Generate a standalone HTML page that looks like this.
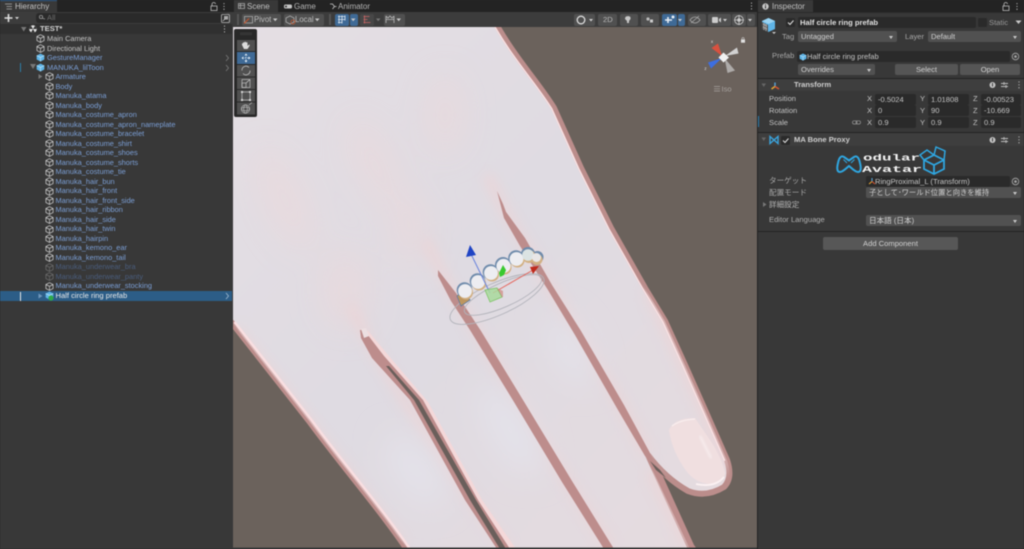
<!DOCTYPE html>
<html><head><meta charset="utf-8"><title>Unity</title>
<style>
*{box-sizing:border-box}
html,body{margin:0;padding:0;width:1024px;height:549px;overflow:hidden;background:#282828}
body{position:relative;font-family:"Liberation Sans","Noto Sans CJK JP",sans-serif;font-size:7.6px;color:#c4c4c4}
#all{position:absolute;inset:0;filter:blur(.4px)}
.a{position:absolute;white-space:nowrap}
.t{line-height:10px;height:10px}
.f{position:absolute;background:#2a2a2a;border-radius:2px;line-height:11px;height:11px;padding-left:3px;color:#c4c4c4;white-space:nowrap}
.d{position:absolute;background:#515151;border-radius:2px;line-height:11px;height:11px;padding-left:3px;color:#d0d0d0;white-space:nowrap}
.d:after{content:"";position:absolute;right:4px;top:4.5px;border:2.5px solid transparent;border-top:3px solid #c8c8c8;border-bottom:0}
.b{position:absolute;background:#555;border-radius:2px;text-align:center;color:#d0d0d0;line-height:11px;height:11px}
.k{position:absolute;background:#505050;border-radius:2px;height:12px;top:14px}
#hr{position:absolute;left:0;top:34px;width:232px;font-size:7.4px}
.r{position:relative;height:9.52px;line-height:9.52px;color:#7b9fd6;white-space:nowrap}
.r svg{position:absolute;top:.3px;left:44.5px;width:9px;height:9px}
.r span{position:absolute;left:55.5px;top:0}
.r.l1 svg{left:36px}.r.l1 span{left:47px}
.r.dim{color:#4a5d7d}.r.dim svg{opacity:.35}
</style></head><body>
<svg width="0" height="0" style="position:absolute"><defs>
<symbol id="cube" viewBox="0 0 8 8"><path d="M4 .6 7.2 2.2V5.8L4 7.5.8 5.8V2.2ZM.8 2.2 4 3.9 7.2 2.2M4 3.9V7.500" fill="none" stroke="#c2c2c2" stroke-width=".7"/></symbol>
<symbol id="pc" viewBox="0 0 8 8"><path d="M4 .5 7.4 2.2V5.8L4 7.6.6 5.8V2.2Z" fill="#5fb4e6"/><path d="M.6 2.2 4 3.9 7.4 2.2M4 3.9V7.6" fill="none" stroke="#cfeaf9" stroke-width=".5"/></symbol>
</defs></svg>
<div id="all">

<!-- Hierarchy -->
<div class="a" style="left:0;top:0;width:233px;height:549px;background:#383838"></div>
<div class="a" style="left:0;top:0;width:233px;height:12px;background:#232323"></div>
<div class="a" style="left:0;top:0;width:57px;height:12px;background:#383838;border-top:1px solid #2d5c8c"></div>
<svg class="a" style="left:5px;top:3px" width="7" height="7"><path d="M0 1H7M1.5 3.5H7M1.5 6H7" stroke="#aaa" stroke-width=".8"/></svg>
<div class="a t" style="left:15px;top:2px;color:#c4c4c4;font-size:8px">Hierarchy</div>
<svg class="a" style="left:210px;top:2px" width="20" height="9"><rect x="1" y="4" width="6" height="4.5" fill="none" stroke="#bbb" stroke-width=".8"/><path d="M2 4V2.5A1.6 1.6 0 0 1 5.5 2" fill="none" stroke="#bbb" stroke-width=".8"/><path d="M14 1.2v.9M14 4v.9M14 6.8v.9" stroke="#ccc" stroke-width="1.1"/></svg>
<div class="a" style="left:0;top:12px;width:233px;height:12px;background:#3c3c3c"></div>
<svg class="a" style="left:4px;top:13px" width="16" height="10"><path d="M4.5 1v8M.5 5h8" stroke="#e0e0e0" stroke-width="1.6"/><path d="M11 4h4l-2 2.4z" fill="#d0d0d0"/></svg>
<div class="a" style="left:36px;top:13px;width:192px;height:10px;background:#2a2a2a;border-radius:3px"></div>
<div class="a" style="left:47px;top:13px;line-height:10px;color:#6c6c6c">All</div>
<svg class="a" style="left:38px;top:14px" width="8" height="8"><circle cx="3" cy="3" r="1.6" fill="none" stroke="#999" stroke-width=".8"/><path d="M4.2 4.2 7 5" stroke="#999" stroke-width=".8"/></svg>
<svg class="a" style="left:221px;top:13.5px" width="9" height="9"><rect x=".5" y=".5" width="8" height="8" rx="1" fill="none" stroke="#bbb" stroke-width=".8"/><rect x="3" y="2" width="4" height="3.6" fill="#aaa"/><path d="M1.8 7 4 5" stroke="#ccc" stroke-width=".8"/></svg>
<div class="a" style="left:0;top:24px;width:232px;height:10px;background:#303030"></div>
<svg class="a" style="left:21px;top:27px" width="6" height="6"><path d="M0 0H5.5L2.7 4.5Z" fill="#777"/></svg>
<svg class="a" style="left:29px;top:25px" width="8" height="8"><circle cx="4" cy="4" r="3.8" fill="#e2e2e2"/><path d="M4 4 2 .9A3.6 3.6 0 0 0 .4 4ZM4 4 6 .9A3.6 3.6 0 0 1 7.6 4ZM4 4 2.2 7.2A3.6 3.6 0 0 0 5.8 7.2Z" fill="#333"/></svg>
<div class="a t" style="left:40px;top:24px;color:#d2d2d2;font-weight:bold">TEST*</div>
<svg class="a" style="left:223px;top:25px" width="3" height="8"><path d="M1.5 .6v1M1.5 3.5v1M1.5 6.4v1" stroke="#ccc" stroke-width="1"/></svg>

<div class="a" style="left:0;top:291px;width:232px;height:10px;background:#2c5d87"></div>
<div class="a" style="left:19.5px;top:292px;width:1.5px;height:9px;background:#e6e6e6"></div>
<div class="a" style="left:19.5px;top:63px;width:1px;height:9px;background:#2d7ea8"></div>

<div id="hr">
<div class="r l1" style="color:#c4c4c4"><svg><use href="#cube"/></svg><span>Main Camera</span></div>
<div class="r l1" style="color:#c4c4c4"><svg><use href="#cube"/></svg><span>Directional Light</span></div>
<div class="r l1"><svg><use href="#pc"/></svg><span>GestureManager</span></div>
<div class="r l1"><svg><use href="#pc"/></svg><span>MANUKA_lilToon</span></div>
<div class="r"><svg><use href="#cube"/></svg><span>Armature</span></div>
<div class="r"><svg><use href="#cube"/></svg><span>Body</span></div>
<div class="r"><svg><use href="#cube"/></svg><span>Manuka_atama</span></div>
<div class="r"><svg><use href="#cube"/></svg><span>Manuka_body</span></div>
<div class="r"><svg><use href="#cube"/></svg><span>Manuka_costume_apron</span></div>
<div class="r"><svg><use href="#cube"/></svg><span>Manuka_costume_apron_nameplate</span></div>
<div class="r"><svg><use href="#cube"/></svg><span>Manuka_costume_bracelet</span></div>
<div class="r"><svg><use href="#cube"/></svg><span>Manuka_costume_shirt</span></div>
<div class="r"><svg><use href="#cube"/></svg><span>Manuka_costume_shoes</span></div>
<div class="r"><svg><use href="#cube"/></svg><span>Manuka_costume_shorts</span></div>
<div class="r"><svg><use href="#cube"/></svg><span>Manuka_costume_tie</span></div>
<div class="r"><svg><use href="#cube"/></svg><span>Manuka_hair_bun</span></div>
<div class="r"><svg><use href="#cube"/></svg><span>Manuka_hair_front</span></div>
<div class="r"><svg><use href="#cube"/></svg><span>Manuka_hair_front_side</span></div>
<div class="r"><svg><use href="#cube"/></svg><span>Manuka_hair_ribbon</span></div>
<div class="r"><svg><use href="#cube"/></svg><span>Manuka_hair_side</span></div>
<div class="r"><svg><use href="#cube"/></svg><span>Manuka_hair_twin</span></div>
<div class="r"><svg><use href="#cube"/></svg><span>Manuka_hairpin</span></div>
<div class="r"><svg><use href="#cube"/></svg><span>Manuka_kemono_ear</span></div>
<div class="r"><svg><use href="#cube"/></svg><span>Manuka_kemono_tail</span></div>
<div class="r dim"><svg><use href="#cube"/></svg><span>Manuka_underwear_bra</span></div>
<div class="r dim"><svg><use href="#cube"/></svg><span>Manuka_underwear_panty</span></div>
<div class="r"><svg><use href="#cube"/></svg><span>Manuka_underwear_stocking</span></div>
<div class="r" style="color:#e8e8e8;font-size:7.600px"><svg><use href="#pc"/></svg><span>Half circle ring prefab</span></div>
</div>
<svg class="a" style="left:0;top:0" width="233" height="310">
<path d="M30 64H36L33 69Z M38.5 74V79L42.5 76.5Z" fill="#777"/>
<path d="M38.5 293.5V298.5L42.5 296Z" fill="#6f97bb"/>
<circle cx="51" cy="298" r="2.6" fill="#2fa84a"/>
<path d="M226 55 228.5 58 226 61M226 65 228.5 68 226 71" fill="none" stroke="#777" stroke-width=".9"/>
<path d="M226 293 228.5 296 226 299" fill="none" stroke="#9ab4cc" stroke-width=".9"/>
</svg>

<!-- Scene -->
<div class="a" style="left:233px;top:0;width:525px;height:12px;background:#232323"></div>
<div class="a" style="left:234px;top:0;width:44px;height:12px;background:#383838"></div>
<div class="a t" style="left:247px;top:2px;color:#c0c0c0;font-size:8px">Scene</div>
<div class="a t" style="left:294px;top:2px;color:#b4b4b4;font-size:8px">Game</div>
<div class="a t" style="left:338px;top:2px;color:#b4b4b4;font-size:8px">Animator</div>
<svg class="a" style="left:236px;top:0" width="105" height="12"><path d="M2.500 3.500H8.500V8.500H2.500ZM2.500 5.500H8.500M4.500 3.500V8.500" fill="none" stroke="#aaa" stroke-width=".8"/><rect x="48" y="4.500" width="8" height="4" rx="1.500" fill="#c4c4c4"/><circle cx="50" cy="6.500" r="1" fill="#333"/><path d="M94 4H96.500L98.500 6.500H100.500M96.500 9 98.500 6.500" fill="none" stroke="#ccc" stroke-width=".8"/></svg>
<svg class="a" style="left:750px;top:2px" width="3" height="8"><path d="M1.5 .6v1M1.5 3.5v1M1.5 6.4v1" stroke="#ccc" stroke-width="1"/></svg>
<div class="a" style="left:233px;top:12px;width:525px;height:15px;background:#3c3c3c"></div>
<div class="a" style="left:237px;top:14px;width:2px;height:11px;border-left:1px solid #555;border-right:1px solid #555"></div>
<div class="k" style="left:242px;width:39px;top:13.500px"></div>
<div class="a t" style="left:254px;top:14.500px;color:#bbb;font-size:7.800px">Pivot</div>
<div class="k" style="left:284px;width:40px;top:13.500px"></div>
<div class="a t" style="left:295px;top:14.500px;color:#bbb;font-size:7.800px">Local</div>
<div class="a" style="left:329px;top:14px;width:2px;height:11px;border-left:1px solid #555;border-right:1px solid #555"></div>
<div class="k" style="left:335px;width:14px;top:13.500px;background:#3f6a96"></div>
<div class="k" style="left:350px;width:8px;top:13.500px;background:#3f6a96"></div>
<div class="k" style="left:360px;width:14px;top:13.500px;background:#474747"></div>
<div class="k" style="left:384px;width:21px;top:13.500px"></div>
<svg class="a" style="left:233px;top:12px" width="185" height="15">
<path d="M11.500 4.500H19.500V11H11.500Z" fill="none" stroke="#aaa" stroke-width=".8"/><path d="M11 11.500 16 6.500" stroke="#c2552f" stroke-width="1.200"/>
<path d="M53 6 57 4 61 6V10L57 12 53 10Z" fill="none" stroke="#aaa" stroke-width=".8"/><circle cx="60" cy="10" r="2" fill="none" stroke="#c2552f" stroke-width=".8"/>
<path d="M40 6.500H44.500L42.200 9.300ZM82 6.500H86.500L84.200 9.300ZM118 6.500H122.500L120.200 9.300ZM163.500 6.500H168L165.700 9.300Z" fill="#c8c8c8"/>
<path d="M143 6.500H147.500L145.200 9.300Z" fill="#777"/>
<path d="M105 4.500h7M105 7.500h7M105 10.500h4M106 3.500v8M109 3.500v8M112 3.500v5" stroke="#dfe8f1" stroke-width=".8" fill="none"/>
<path d="M130.500 4.500h6M130.500 7.500h4M130.500 10.500h7M131.500 3.500v8" stroke="#c66" stroke-width=".8" fill="none"/>
<path d="M153 4v7M161 4v7M153 7.500h8M153 4l2 2 2-2 2 2 2-2" stroke="#bbb" stroke-width=".8" fill="none"/>
</svg>
<div class="k" style="left:574px;width:21px"></div>
<div class="k" style="left:598px;width:19px"></div>
<div class="a t" style="left:603px;top:15px;color:#bbb">2D</div>
<div class="k" style="left:620px;width:18px"></div>
<div class="k" style="left:641px;width:18px"></div>
<div class="k" style="left:662px;width:15px;background:#3f6a96"></div>
<div class="k" style="left:677.500px;width:7.500px;background:#3f6a96"></div>
<div class="k" style="left:688px;width:18px"></div>
<div class="k" style="left:708px;width:23px"></div>
<div class="k" style="left:732px;width:14px"></div>
<div class="k" style="left:746.500px;width:8px"></div>
<svg class="a" style="left:560px;top:12px" width="198" height="15">
<circle cx="21" cy="8" r="3.800" fill="none" stroke="#ddd" stroke-width="1.300"/>
<path d="M29 7H33L31 9.500ZM118 7H122L120 9.500ZM163 7H167L165 9.500ZM188 7H192L190 9.500Z" fill="#d0d0d0"/>
<path d="M66 4.500c3-1 5 0 4.500 2.500l-1.500 2v2h-2V9L65 7c0-1 .3-2 1-2.500Z" fill="#c6c6c6"/>
<circle cx="88" cy="7" r="1.600" fill="#bbb"/><rect x="90" y="7.500" width="3" height="3" fill="#ccc"/>
<path d="M105 8h7M108 5v6" stroke="#e8eef5" stroke-width="1.600"/><circle cx="113" cy="5" r="1.500" fill="#e8eef5"/>
<path d="M130 8c3-4 7-4 10 0-3 4-7 4-10 0ZM131 11 139 4" fill="none" stroke="#aaa" stroke-width=".8"/>
<rect x="152" y="5" width="6" height="6" rx="1" fill="#ccc"/><path d="M159 7 161 5.500V10.500L159 9Z" fill="#ccc"/>
<circle cx="179" cy="8" r="4.300" fill="none" stroke="#ccc" stroke-width=".8"/><path d="M179 3V13M174 8H184" stroke="#ccc" stroke-width=".8"/><circle cx="179" cy="8" r="1.800" fill="#ccc"/>
</svg>

<svg class="a" style="left:233px;top:27px" width="525" height="522" viewBox="233 27 525 522">
<defs>
<filter id="b1"><feGaussianBlur stdDeviation="1"/></filter>
<filter id="b6" x="-30%" y="-30%" width="160%" height="160%"><feGaussianBlur stdDeviation="6"/></filter>
<filter id="b14" x="-50%" y="-50%" width="200%" height="200%"><feGaussianBlur stdDeviation="16"/></filter>
<linearGradient id="sk" x1="0" y1="0" x2="1" y2="1"><stop offset="0" stop-color="#e5dfe4"/><stop offset=".5" stop-color="#dfdbe2"/><stop offset="1" stop-color="#e6dbdf"/></linearGradient>
<clipPath id="hc"><path d="M225 15H491C512 55 538 82 554 108L581 168 611 228 645 288 665 321 685 365 705 410 727 460Q733 478 724 487 706 498 688 491 665 478 648 455L696 560H414C385 515 345 470 309 421L265 365 232 323 220 310Z"/></clipPath>
</defs>
<rect x="233" y="27" width="525" height="522" fill="#6b625c"/>
<path d="M225 15H491C512 55 538 82 554 108L581 168 611 228 645 288 665 321 685 365 705 410 727 460Q733 478 724 487 706 498 688 491 665 478 648 455L696 560H414C385 515 345 470 309 421L265 365 232 323 220 310Z" fill="url(#sk)" stroke="#bb8d8b" stroke-width="6"/>
<g clip-path="url(#hc)">
 <g filter="url(#b14)" fill="#ecd8da" opacity=".55">
  <ellipse cx="445" cy="115" rx="18" ry="40"/>
  <ellipse cx="375" cy="165" rx="18" ry="50" transform="rotate(-25 375 165)"/>
  <ellipse cx="285" cy="200" rx="20" ry="55" transform="rotate(-25 285 200)"/>
  <ellipse cx="410" cy="230" rx="18" ry="36"/>
  <ellipse cx="345" cy="290" rx="24" ry="40"/>
 </g>
 <g filter="url(#b6)" fill="none" stroke="#edd4d6" opacity=".85">
  <path d="M487 175 505 211 551 288 578 331 621 405 648 455" stroke-width="9"/>
  <path d="M425 240 450 288 517 398 567 481 611 549" stroke-width="9"/>
  <path d="M350 305 376 355 450 470 507 549" stroke-width="9"/>
  <path d="M234 330 309 425 400 545" stroke-width="12"/>
  <path d="M648 290 705 410 725 470" stroke-width="10"/>
  <path d="M650 470 690 549" stroke-width="9"/>
 </g>
 <g filter="url(#b14)" fill="#e4e3eb">
  <ellipse cx="415" cy="470" rx="18" ry="40" transform="rotate(-35 415 470)"/>
  <ellipse cx="510" cy="430" rx="18" ry="50" transform="rotate(-30 510 430)"/>
  <ellipse cx="570" cy="350" rx="14" ry="36" transform="rotate(-28 570 350)"/>
 </g>
 <path d="M491 15C512 55 538 82 554 108L581 168 611 228 645 288 665 321 685 365 705 410 727 460" fill="none" stroke="#fae3e5" stroke-width="1.400" transform="translate(-2.200 .8)"/>
 <path d="M232 323 265 365 309 421C345 470 385 515 414 560" fill="none" stroke="#f9dfe1" stroke-width="2.500" transform="translate(2.500 -1)"/>
</g>
<!-- left cleft -->
<path d="M364 331 384 356 423 400 478 500 510 549 516 549 482 500 428 402 388 355 368 331Z" fill="#f4d8d9"/>
<path d="M360 330 364 330 384 356 423 400 478 500 510 549H497L465 500 410 400 372 358 361 338Z" fill="#bd8d8c"/>
<path d="M386 366 389 366 419 400 476 500 506 549H500L470 500 414 400Z" fill="#6a5f5b"/>
<path d="M361 329 366 328 369 336 364 338Z" fill="#ecdfe1"/>
<!-- middle cleft -->
<path d="M438 270 456 293 481 331 523 400 572 481 614 549H604L562 482 514 402 470 330 451 301 438 276Z" fill="#bd8d8c"/>
<!-- right cleft -->
<path d="M497 191 503 204 506 212 525 238 552 285 581 331 624 405 650 453 654 463 645 456 618 410 575 335 548 290 520 246 504 218Z" fill="#bd8d8c"/>
<path d="M646 456 654 463 661 472 694 545 697 549H690Z" fill="#bd8d8c"/>
<path d="M650 461 660 470 666 478 656 470Z" fill="#6a5f5b"/>
<!-- nail -->
<path d="M669 430Q674 418 695 418L710 440Q722 458 725 473 724 482 712 484 697 484 687 472 672 452 669 430Z" fill="#f0dfe0"/>
<path d="M672 426Q680 420 695 419" fill="none" stroke="#f8eeee" stroke-width="1.300"/>
<path d="M696 484Q715 488 724 477" fill="none" stroke="#fbf1f2" stroke-width="1.800"/>
<path d="M700 436 711 458" stroke="#fbf5f6" stroke-width="1.300" fill="none" filter="url(#b1)"/>

<!-- ring outlines -->
<g fill="none" stroke="#b2b3ba" stroke-width=".9">
 <ellipse cx="497" cy="299" rx="51" ry="16" transform="rotate(-24 497 299)"/>
 <ellipse cx="503" cy="295" rx="42" ry="12" transform="rotate(-24 503 295)"/>
</g>
<!-- ring -->
<path d="M457 296 461 306 470 300 464 290Z" fill="#bd965f" stroke="#5f7c9e" stroke-width=".8"/>
<g fill="#6f8bab">
 <circle cx="464.500" cy="290" r="7.800"/><circle cx="477.500" cy="281" r="7.800"/><circle cx="490.500" cy="272" r="7.800"/><circle cx="503" cy="265" r="8"/><circle cx="516" cy="258" r="7.800"/><circle cx="528" cy="254" r="7"/><circle cx="537.500" cy="257" r="6"/>
</g>
<g fill="#d2b083">
 <circle cx="466" cy="292.500" r="7"/><circle cx="479" cy="283.500" r="7"/><circle cx="492" cy="274.500" r="7"/><circle cx="504.500" cy="267.500" r="7"/><circle cx="517.500" cy="260.500" r="7"/><circle cx="529" cy="256.500" r="6.500"/><circle cx="537" cy="259.500" r="5.500"/>
</g>
<g fill="#ededf1">
 <circle cx="465" cy="291" r="6.900"/><circle cx="478" cy="282" r="6.900"/><circle cx="491" cy="273" r="6.900"/><circle cx="503.500" cy="266" r="7.100"/><circle cx="516.500" cy="259" r="6.900"/><circle cx="528" cy="255" r="5.800" fill="#dbe3e3"/><circle cx="536.500" cy="257.500" r="4.500" fill="#e8e6e6"/>
</g>
<!-- move gizmo -->
<path d="M490 293 471 254" stroke="#6a84dc" stroke-width="1"/>
<path d="M493 293 533 270" stroke="#e4685f" stroke-width="1"/>
<path d="M470 245 466 257 476 255Z" fill="#1f44c4"/>
<path d="M539 266 530 267 533 274Z" fill="#bf2a1d"/>
<path d="M503 265 499 273 500 277 504 275 506 270Z" fill="#38c92f"/>
<path d="M485 290 497 288 502 297 490 302Z" fill="#a9d99c" fill-opacity=".85" stroke="#7fc56a" stroke-width=".8"/>
<path d="M497 288 503 291 503 297 502 297Z" fill="#cc7a70" fill-opacity=".6"/>

<!-- scene gizmo -->
<g>
 <path d="M722 56 711.500 48 718 43.500Z" fill="#d8513f"/>
 <path d="M725 56 737 47.500 738.500 53.500Z" fill="#d2d2d2"/>
 <path d="M724.500 58 727.500 73 735 70.500Z" fill="#aeaba9"/>
 <path d="M722 58 708 62.500 711 68.500Z" fill="#3d6ee0"/>
 <path d="M723.500 52.500 729 57.500 723.500 62.500 718.500 57.500Z" fill="#f1f1f1"/>
 <text x="712" y="43" font-size="4.500" fill="#ddd" text-anchor="middle" font-family="Liberation Sans">x</text>
 <text x="705.500" y="70" font-size="4.500" fill="#ddd" text-anchor="middle" font-family="Liberation Sans">z</text>
 <rect x="741" y="39.500" width="4" height="3.200" fill="#e0e0e0"/><path d="M742 39.500v-1a1 1 0 0 1 2 0v1" fill="none" stroke="#ddd" stroke-width=".6"/>
 <path d="M714 86.500h6M714 88.800h6M714 91h6" stroke="#a8a39f" stroke-width=".7"/>
 <text x="721.500" y="91.700" font-size="7.500" fill="#a8a39f" font-family="Liberation Sans">Iso</text>
</g>

<!-- tool panel -->
<rect x="234" y="29" width="23" height="88" rx="2" fill="#282828"/>
<path d="M240 33h12M240 34.500h12" stroke="#4d4d4d" stroke-width=".6"/>
<g fill="#505050">
 <rect x="237" y="40" width="18" height="11"/><rect x="237" y="52" width="18" height="12" fill="#3f6a96"/>
 <rect x="237" y="65" width="18" height="11.500"/><rect x="237" y="77.500" width="18" height="11.500"/>
 <rect x="237" y="90" width="18" height="11.500"/><rect x="237" y="102.500" width="18" height="12"/>
</g>
<path d="M242 45 v-1c0-1 1-1 1 0v-1c0-1 1.500-1 1.500 0v-.5c0-1 1.500-1 1.500 0v.5c0-1 1.500-1 1.500 0v3l1-1c1-1 1.500 0 1 1l-2 3H244Z" fill="#dcdcdc"/>
<path d="M246 54v8M242 58h8" stroke="#cfe0f0" stroke-width=".7" stroke-dasharray="1.500 1"/><path d="M246 53.500 244.500 55.500H247.500ZM246 62.500 244.500 60.500H247.500ZM241.500 58 243.500 56.500V59.500ZM250.500 58 248.500 56.500V59.500Z" fill="#e6eff7"/>
<path d="M250 70.500A4 4 0 0 1 243 73.500M242 70.500A4 4 0 0 1 249 67.500" fill="none" stroke="#bcbcbc" stroke-width=".8"/>
<rect x="242" y="79.500" width="8" height="8" fill="none" stroke="#bcbcbc" stroke-width=".7"/><rect x="242" y="83" width="4" height="4.500" fill="none" stroke="#bcbcbc" stroke-width=".7"/><path d="M246 83 250 79.500" stroke="#ccc" stroke-width=".7"/>
<rect x="242" y="92" width="8" height="8" fill="none" stroke="#c4c4c4" stroke-width=".7"/><path d="M241 91h2v2h-2ZM249 91h2v2h-2ZM241 99h2v2h-2ZM249 99h2v2h-2Z" fill="#d4d4d4"/>
<g fill="none" stroke="#bcbcbc" stroke-width=".6"><circle cx="245.500" cy="109" r="4.200"/><ellipse cx="245.500" cy="109" rx="4.200" ry="1.800"/><ellipse cx="245.500" cy="109" rx="1.800" ry="4.200"/><path d="M249 105 252 102.500"/></g>
<rect x="233" y="547.500" width="525" height="1.500" fill="#3a3a3a"/>
</svg>

<!-- Inspector -->
<div class="a" style="left:757px;top:0;width:267px;height:549px;background:#383838;border-left:1px solid #232323"></div>
<div class="a" style="left:757px;top:0;width:267px;height:12px;background:#232323"></div>
<div class="a" style="left:758px;top:0;width:55px;height:12px;background:#383838"></div>
<svg class="a" style="left:762px;top:3px" width="7" height="7"><circle cx="3.500" cy="3.500" r="3.200" fill="#c8c8c8"/><rect x="3" y="2.800" width="1" height="2.700" fill="#333"/><rect x="3" y="1.300" width="1" height="1" fill="#333"/></svg>
<div class="a t" style="left:772px;top:2px;color:#c0c0c0;font-size:8px">Inspector</div>
<svg class="a" style="left:1002px;top:2px" width="20" height="9"><rect x="1" y="4" width="6" height="4.500" fill="none" stroke="#bbb" stroke-width=".8"/><path d="M2 4V2.500A1.600 1.600 0 0 1 5.500 2" fill="none" stroke="#bbb" stroke-width=".8"/><path d="M15 1.200v.9M15 4v.9M15 6.800v.9" stroke="#ccc" stroke-width="1.100"/></svg>
<div class="a" style="left:758px;top:12px;width:266px;height:1px;background:#2a2a2a"></div>

<svg class="a" style="left:761px;top:17px" width="16" height="18"><path d="M7.500 1 14 4V12L7.500 15 1 12V4Z" fill="#5fb4e6"/><path d="M1 4 7.500 7 14 4 7.500 1Z" fill="#9bd3f1"/><path d="M1 5 7 8V15L1 12Z" fill="#555"/><path d="M2 7l4 2M2 10l4 2M3 6v7M5 7v7" stroke="#ccc" stroke-width=".6"/><path d="M11 15H15L13 17Z" fill="#ccc"/></svg>
<div class="a" style="left:786px;top:18px;width:9px;height:9px;background:#2a2a2a;border-radius:1.500px"></div>
<svg class="a" style="left:786px;top:18px" width="9" height="9"><path d="M2 4.500 4 6.500 7.500 2.500" fill="none" stroke="#ddd" stroke-width="1.100"/></svg>
<div class="f" style="left:798px;top:17px;width:178px;color:#e0e0e0;font-weight:bold;padding-left:2px">Half circle ring prefab</div>
<div class="a" style="left:978px;top:18px;width:9px;height:9px;background:#2a2a2a;border-radius:1.500px"></div>
<div class="a t" style="left:989px;top:18px;color:#999">Static</div>
<svg class="a" style="left:1015px;top:20px" width="7" height="5"><path d="M.5 .5H6.500L3.500 4Z" fill="#c8c8c8"/></svg>

<div class="a t" style="left:782px;top:32px;color:#a8a8a8">Tag</div>
<div class="d" style="left:798px;top:31px;width:99px;height:11px">Untagged</div>
<div class="a t" style="left:905px;top:32px;color:#a8a8a8">Layer</div>
<div class="d" style="left:928px;top:31px;width:93px">Default</div>
<div class="a t" style="left:772px;top:51px;color:#a8a8a8">Prefab</div>
<div class="f" style="left:797px;top:51px;width:213px;padding-left:10px">Half circle ring prefab</div>
<svg class="a" style="left:799px;top:53px" width="8" height="8"><use href="#pc"/></svg>
<svg class="a" style="left:1011px;top:52px" width="9" height="9"><circle cx="4.500" cy="4.500" r="3.300" fill="none" stroke="#aaa" stroke-width=".8"/><circle cx="4.500" cy="4.500" r="1.300" fill="#aaa"/></svg>
<div class="d" style="left:798px;top:64px;width:77px">Overrides</div>
<div class="b" style="left:895px;top:64px;width:63px">Select</div>
<div class="b" style="left:960px;top:64px;width:60px">Open</div>
<div class="a" style="left:758px;top:78px;width:266px;height:1px;background:#232323"></div>

<div class="a" style="left:758px;top:79px;width:266px;height:12px;background:#3e3e3e"></div>
<svg class="a" style="left:761px;top:81px" width="22" height="9"><path d="M.5 2.500H5L2.700 6Z" fill="#666"/><path d="M14 1.500V5.500" stroke="#58a4d8" stroke-width="1.400"/><path d="M14 5.500 10.500 8" stroke="#e8a732" stroke-width="1.400"/><path d="M14 5.500 18 8" stroke="#d8532f" stroke-width="1.400"/></svg>
<div class="a t" style="left:794px;top:80px;color:#cfcfcf;font-weight:bold">Transform</div>
<svg class="a" style="left:988px;top:80px" width="34" height="10"><circle cx="4.500" cy="5" r="3" fill="#c4c4c4"/><rect x="4" y="3" width="1" height="3.500" fill="#3e3e3e"/><path d="M13 3.500h7M13 6.500h7" stroke="#bbb" stroke-width=".9"/><path d="M16 2v3M18 5v3" stroke="#bbb" stroke-width=".9"/><path d="M31 1.500v.9M31 4.400v.9M31 7.300v.9" stroke="#ccc" stroke-width="1.100"/></svg>

<div class="a t" style="left:769px;top:94px;color:#c2c2c2">Position</div>
<div class="a t" style="left:769px;top:105.500px;color:#c2c2c2">Rotation</div>
<div class="a t" style="left:769px;top:117.500px;color:#c2c2c2">Scale</div>
<div class="a" style="left:758px;top:116px;width:1px;height:11px;background:#2f7fb0"></div>
<svg class="a" style="left:852px;top:120px" width="9" height="5"><rect x=".5" y=".8" width="4.500" height="3.200" rx="1.500" fill="none" stroke="#999" stroke-width=".7"/><rect x="4" y=".8" width="4.500" height="3.200" rx="1.500" fill="none" stroke="#999" stroke-width=".7"/></svg>

<div class="a t" style="left:867px;top:94px">X</div><div class="f" style="left:875px;top:93.500px;width:41px">-0.5024</div>
<div class="a t" style="left:920px;top:94px">Y</div><div class="f" style="left:928px;top:93.500px;width:41px">1.01808</div>
<div class="a t" style="left:973px;top:94px">Z</div><div class="f" style="left:981px;top:93.500px;width:40px">-0.00523</div>
<div class="a t" style="left:867px;top:105.500px">X</div><div class="f" style="left:875px;top:105px;width:41px">0</div>
<div class="a t" style="left:920px;top:105.500px">Y</div><div class="f" style="left:928px;top:105px;width:41px">90</div>
<div class="a t" style="left:973px;top:105.500px">Z</div><div class="f" style="left:981px;top:105px;width:40px">-10.669</div>
<div class="a t" style="left:867px;top:117.500px">X</div><div class="f" style="left:875px;top:117px;width:41px">0.9</div>
<div class="a t" style="left:920px;top:117.500px">Y</div><div class="f" style="left:928px;top:117px;width:41px">0.9</div>
<div class="a t" style="left:973px;top:117.500px">Z</div><div class="f" style="left:981px;top:117px;width:40px">0.9</div>
<div class="a" style="left:758px;top:132px;width:266px;height:1px;background:#232323"></div>

<div class="a" style="left:758px;top:133px;width:266px;height:13px;background:#3e3e3e"></div>
<svg class="a" style="left:761px;top:135px" width="34" height="10"><path d="M.5 2.500H5L2.700 6Z" fill="#666"/><path d="M9 1.500 13 5 17 1.500V8.500L13 5 9 8.500Z" fill="none" stroke="#3aa3dc" stroke-width="1.400"/></svg>
<div class="a" style="left:781px;top:135.500px;width:9px;height:9px;background:#2a2a2a;border-radius:1.500px"></div>
<svg class="a" style="left:781px;top:135.500px" width="9" height="9"><path d="M2 4.500 4 6.500 7.500 2.500" fill="none" stroke="#ddd" stroke-width="1.100"/></svg>
<div class="a t" style="left:794px;top:135px;color:#cfcfcf;font-weight:bold">MA Bone Proxy</div>
<svg class="a" style="left:988px;top:135px" width="34" height="10"><circle cx="4.500" cy="5" r="3" fill="#c4c4c4"/><rect x="4" y="3" width="1" height="3.500" fill="#3e3e3e"/><path d="M13 3.500h7M13 6.500h7" stroke="#bbb" stroke-width=".9"/><path d="M16 2v3M18 5v3" stroke="#bbb" stroke-width=".9"/><path d="M31 1.500v.9M31 4.400v.9M31 7.300v.9" stroke="#ccc" stroke-width="1.100"/></svg>

<svg class="a" style="left:830px;top:145px" width="125" height="30">
<path d="M10 27C6.500 27 7 22 8 18 9 13 11 10 14 12L19 15.500 24 12C27 10 29 13 30 18 31 22 31.500 27 28 27 25 27 21.500 23 19 21 16.500 23 13 27 10 27Z" fill="none" stroke="#2fa6e0" stroke-width="2"/>
<path d="M17 18 13.500 14.500M21 18 24.500 14.500" stroke="#2fa6e0" stroke-width="1"/>
<text x="33" y="15.500" font-family="Liberation Mono" font-weight="bold" font-size="9.500" fill="#f2f2f2" textLength="57" lengthAdjust="spacingAndGlyphs">odular</text>
<text x="32" y="27" font-family="Liberation Mono" font-weight="bold" font-size="9.500" fill="#f2f2f2" textLength="60" lengthAdjust="spacingAndGlyphs">Avatar</text>
<path d="M94 15 104 10 114 15V24L104 29 94 24ZM94 15 104 20 114 15M104 20V29" fill="none" stroke="#2fa6e0" stroke-width="1.800"/>
<path d="M94 15 90 10 97 5 104 10ZM114 15 115 6 106 2 104 10" fill="none" stroke="#2fa6e0" stroke-width="1.500"/>
</svg>

<div class="a t" style="left:769px;top:176px;color:#a8a8a8">ターゲット</div>
<div class="f" style="left:866px;top:175.500px;width:144px;padding-left:9px">RingProximal_L (Transform)</div>
<svg class="a" style="left:868px;top:177px" width="8" height="8"><path d="M4 1V4.500" stroke="#58a4d8" stroke-width="1.100"/><path d="M4 4.500 1 7" stroke="#e8a732" stroke-width="1.100"/><path d="M4 4.500 7 7" stroke="#d8532f" stroke-width="1.100"/></svg>
<svg class="a" style="left:1011px;top:176.500px" width="9" height="9"><circle cx="4.500" cy="4.500" r="3.300" fill="none" stroke="#aaa" stroke-width=".8"/><circle cx="4.500" cy="4.500" r="1.300" fill="#aaa"/></svg>
<div class="a t" style="left:769px;top:187.500px;color:#a8a8a8">配置モード</div>
<div class="d" style="left:866px;top:187px;width:155px;font-size:7.300px">子として･ワールド位置と向きを維持</div>
<svg class="a" style="left:762px;top:201px" width="6" height="7"><path d="M1 1V6L4.500 3.500Z" fill="#777"/></svg>
<div class="a t" style="left:769px;top:199.500px;color:#b4b4b4">詳細設定</div>
<div class="a t" style="left:769px;top:215px;color:#b0b0b0">Editor Language</div>
<div class="d" style="left:866px;top:215px;width:155px">日本語 (日本)</div>
<div class="a" style="left:758px;top:231px;width:266px;height:1px;background:#232323"></div>
<div class="b" style="left:823px;top:237px;width:135px;height:13px;line-height:13px;background:#575757">Add Component</div>

</div>
</body></html>
